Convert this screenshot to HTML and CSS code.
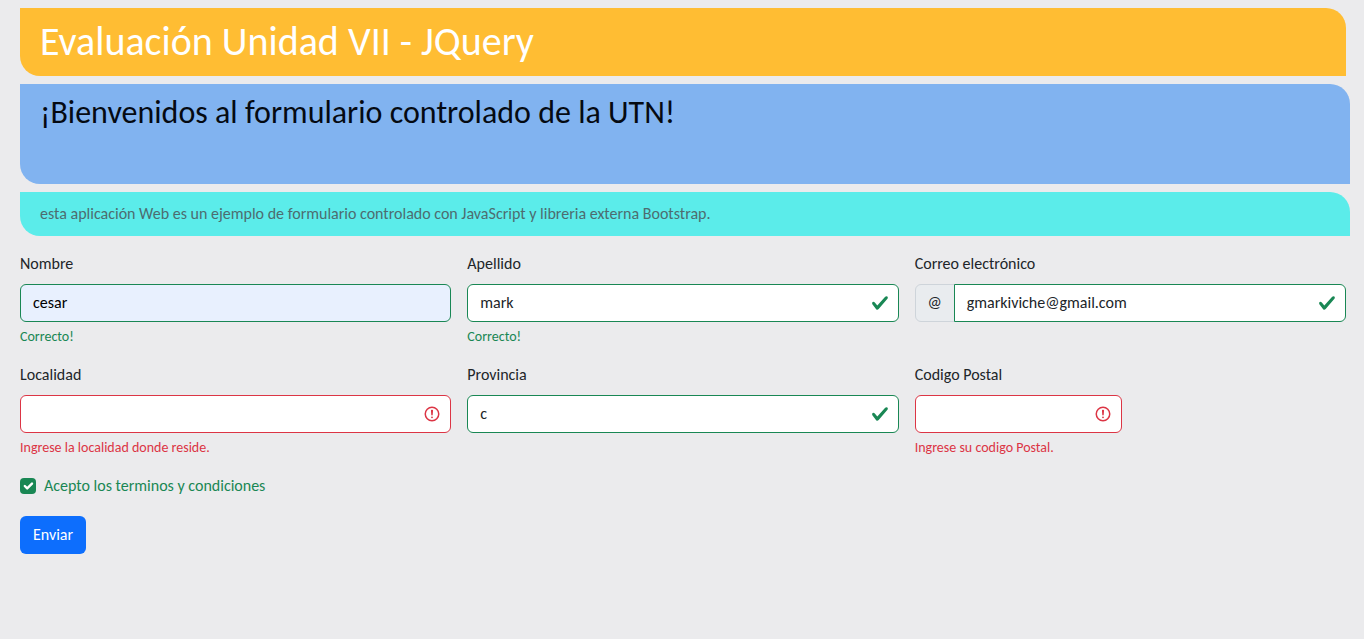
FILE: index.html
```
<!DOCTYPE html>
<html lang="es">
<head>
<meta charset="utf-8">
<title>Evaluación Unidad VII - JQuery</title>
<link rel="stylesheet" href="styles.css">
</head>
<body>
<header class="banner banner-title"><h1><span>Evaluación Unidad VII - JQuery</span></h1></header>
<section class="banner banner-welcome"><h2><span>¡Bienvenidos al formulario controlado de la UTN!</span></h2></section>
<p class="banner banner-info"><span>esta aplicación Web es un ejemplo de formulario controlado con JavaScript y libreria externa Bootstrap.</span></p>
<form class="form">
  <div class="field">
    <label class="label"><span>Nombre</span></label>
    <div class="control valid autofill"><span class="value">cesar</span></div>
    <div class="feedback ok"><span>Correcto!</span></div>
  </div>
  <div class="field">
    <label class="label"><span>Apellido</span></label>
    <div class="control valid"><span class="value">mark</span>
      <svg class="icon" viewBox="0 0 8 8"><path fill="#198754" d="M2.3 6.73.6 4.53c-.4-1.04.46-1.4 1.1-.8l1.1 1.4 3.4-3.8c.6-.63 1.6-.27 1.2.7l-4 4.6c-.43.5-.8.4-1.1.1z"/></svg></div>
    <div class="feedback ok"><span>Correcto!</span></div>
  </div>
  <div class="field">
    <label class="label"><span>Correo electrónico</span></label>
    <div class="group">
      <span class="addon">@</span>
      <div class="control valid"><span class="value mail">gmarkiviche@gmail.com</span>
        <svg class="icon" viewBox="0 0 8 8"><path fill="#198754" d="M2.3 6.73.6 4.53c-.4-1.04.46-1.4 1.1-.8l1.1 1.4 3.4-3.8c.6-.63 1.6-.27 1.2.7l-4 4.6c-.43.5-.8.4-1.1.1z"/></svg></div>
    </div>
  </div>
  <div class="field">
    <label class="label"><span>Localidad</span></label>
    <div class="control invalid">
      <svg class="icon" viewBox="0 0 12 12" fill="none" stroke="#dc3545"><circle cx="6" cy="6" r="4.5"/><path stroke-linejoin="round" d="M5.8 3.6h.4L6 6.5z"/><circle cx="6" cy="8.2" r=".6" fill="#dc3545" stroke="none"/></svg></div>
    <div class="feedback error"><span>Ingrese la localidad donde reside.</span></div>
  </div>
  <div class="field">
    <label class="label"><span>Provincia</span></label>
    <div class="control valid"><span class="value">c</span>
      <svg class="icon" viewBox="0 0 8 8"><path fill="#198754" d="M2.3 6.73.6 4.53c-.4-1.04.46-1.4 1.1-.8l1.1 1.4 3.4-3.8c.6-.63 1.6-.27 1.2.7l-4 4.6c-.43.5-.8.4-1.1.1z"/></svg></div>
  </div>
  <div class="field postal">
    <label class="label"><span>Codigo Postal</span></label>
    <div class="control invalid">
      <svg class="icon" viewBox="0 0 12 12" fill="none" stroke="#dc3545"><circle cx="6" cy="6" r="4.5"/><path stroke-linejoin="round" d="M5.8 3.6h.4L6 6.5z"/><circle cx="6" cy="8.2" r=".6" fill="#dc3545" stroke="none"/></svg></div>
    <div class="feedback error"><span>Ingrese su codigo Postal.</span></div>
  </div>
  <div class="check">
    <svg class="box" viewBox="0 0 20 20"><rect width="20" height="20" rx="5" fill="#198754"/><path fill="none" stroke="#fff" stroke-linecap="round" stroke-linejoin="round" stroke-width="3" d="m6 10 3 3 6-6"/></svg>
    <span>Acepto los terminos y condiciones</span>
  </div>
  <button class="submit" type="button">Enviar</button>
</form>
</body>
</html>
```
FILE: styles.css
```
* { box-sizing: border-box; }
body {
  margin: 0;
  padding: 8px 14px 0 20px;
  background: #ebebed;
  color: #212529;
  font: 16px/24px Calibri, Carlito, Lato, sans-serif;
}
h1, h2, p { margin: 0; font-weight: 400; white-space: nowrap; }
.banner { border-radius: 0 20px 0 20px; margin-bottom: 8px; padding: 10px 20px; }
.banner-title { height: 68px; margin-right: 4px; background: #ffbd33; color: #fff; }
.banner-title h1 { font-size: 40px; line-height: 48px; }
.banner-welcome { height: 100px; background: #81b3f0; color: #050a12; }
.banner-welcome h2 { font-size: 32px; line-height: 38px; }
.banner-info { height: 44px; margin-bottom: 16px; background: #5becea; color: #4d6c70; }
.form {
  display: grid;
  grid-template-columns: repeat(3, minmax(0, 1fr));
  gap: 16px;
  margin-right: 4px;
}
.label { display: block; margin-bottom: 8px; }
.control {
  display: flex;
  align-items: center;
  height: 38px;
  padding: 0 9px 0 12px;
  border: 1px solid #198754;
  border-radius: 6px;
  background: #fff;
}
.invalid { border-color: #dc3545; }
.autofill { background: #e8f0fe; color: #000; }
.icon { width: 18px; height: 18px; margin-left: auto; flex: none; }
.feedback { margin-top: 4px; font-size: 14px; line-height: 21px; }
.ok, .check { color: #198754; }
.error { color: #dc3545; }
.group { display: flex; }
.addon {
  width: 40px;
  height: 38px;
  margin-right: -1px;
  border: 1px solid #ced4da;
  border-radius: 6px 0 0 6px;
  background: #e9ecef;
  text-align: center;
  line-height: 36px;
}
.group .control { flex: 1; border-radius: 0 6px 6px 0; }
.postal { width: 207.67px; }
.check { grid-column: 1 / -1; display: flex; align-items: center; gap: 8px; height: 26px; padding-bottom: 2px; }
.box { width: 16px; height: 16px; }
.submit {
  width: 66px;
  height: 38px;
  padding: 0;
  border: 0;
  border-radius: 6px;
  background: #0d6efd;
  color: #fff;
  font: inherit;
}
```
